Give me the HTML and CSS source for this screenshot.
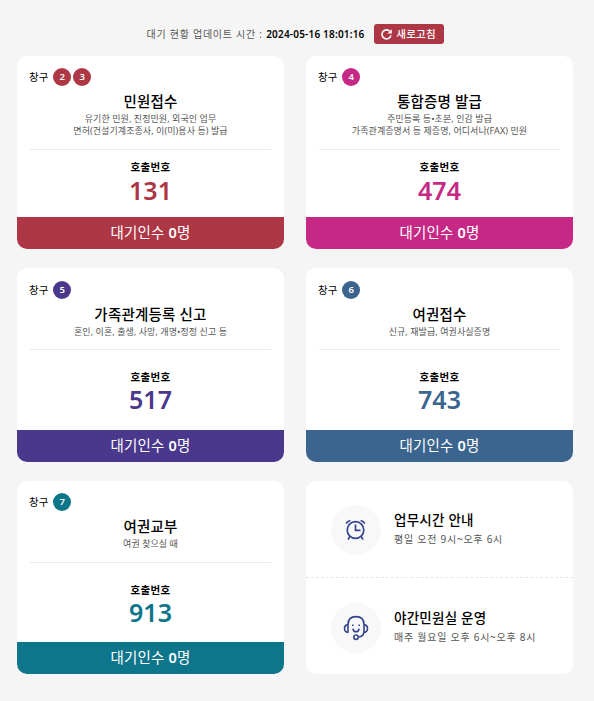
FILE: index.html
```html
<!DOCTYPE html>
<html lang="ko">
<head>
    <meta charset="UTF-8">
    <meta name="viewport" content="width=device-width, initial-scale=1.0">
    <title>민원실 대기 현황</title>
    <link rel="stylesheet" href="styles.css">
</head>
<body>
    <div class="update">
        <p class="update-time">대기 현황 업데이트 시간 : <strong>2024-05-16 18:01:16</strong></p>
        <button type="button" class="refresh">
            <svg width="11" height="11" viewBox="0 0 11 11" fill="none" stroke="#fff" stroke-width="1.6">
                <path d="M9.9 6.3A4.5 4.5 0 1 1 8.8 2.3"/>
                <path d="M10.8 0.2V4.6H6.4Z" fill="#fff" stroke="none"/>
            </svg>
            <span>새로고침</span>
        </button>
    </div>

    <div class="board">
        <div class="card red">
            <div class="window">창구 <span class="num">2</span><span class="num">3</span></div>
            <h2>민원접수</h2>
            <p class="desc">유기한 민원, 진정민원, 외국인 업무<br>면허(건설기계조종사, 이(미)용사 등) 발급</p>
            <div class="call">
                <h3>호출번호</h3>
                <strong>131</strong>
            </div>
            <div class="wait">대기인수 <b>0</b>명</div>
        </div>

        <div class="card pink">
            <div class="window">창구 <span class="num">4</span></div>
            <h2>통합증명 발급</h2>
            <p class="desc">주민등록 등•초본, 인감 발급<br>가족관계증명서 등 제증명, 어디서나(FAX) 민원</p>
            <div class="call">
                <h3>호출번호</h3>
                <strong>474</strong>
            </div>
            <div class="wait">대기인수 <b>0</b>명</div>
        </div>

        <div class="card purple single mid">
            <div class="window">창구 <span class="num">5</span></div>
            <h2>가족관계등록 신고</h2>
            <p class="desc">혼인, 이혼, 출생, 사망, 개명•정정 신고 등</p>
            <div class="call">
                <h3>호출번호</h3>
                <strong>517</strong>
            </div>
            <div class="wait">대기인수 <b>0</b>명</div>
        </div>

        <div class="card blue single mid">
            <div class="window">창구 <span class="num">6</span></div>
            <h2>여권접수</h2>
            <p class="desc">신규, 재발급, 여권사실증명</p>
            <div class="call">
                <h3>호출번호</h3>
                <strong>743</strong>
            </div>
            <div class="wait">대기인수 <b>0</b>명</div>
        </div>

        <div class="card teal single">
            <div class="window">창구 <span class="num">7</span></div>
            <h2>여권교부</h2>
            <p class="desc">여권 찾으실 때</p>
            <div class="call">
                <h3>호출번호</h3>
                <strong>913</strong>
            </div>
            <div class="wait">대기인수 <b>0</b>명</div>
        </div>

        <div class="card info">
            <div class="info-item">
                <div class="icon">
                    <svg width="24" height="24" viewBox="0 0 24 24" fill="none" stroke="#34458f" stroke-width="1.7">
                        <circle cx="11.5" cy="12" r="8.3"/>
                        <path d="M11.5 6.5V12.3H16.6"/>
                        <path d="M6 18.2L4 21.6M17 18.2L19 21.6"/>
                        <path d="M2.2 5.5Q3.4 3.4 6.4 2.5M20.8 5.5Q19.6 3.4 16.6 2.5"/>
                    </svg>
                </div>
                <div>
                    <h4>업무시간 안내</h4>
                    <p>평일 오전 9시~오후 6시</p>
                </div>
            </div>
            <div class="info-item">
                <div class="icon">
                    <svg width="26" height="26" viewBox="0 0 26 26" fill="none" stroke="#34458f" stroke-width="1.6">
                        <path d="M5 17.8V9.5Q5 1.6 13 1.6T21 9.5V16Q21 21.8 15.5 22"/>
                        <path d="M5 9.6Q1.5 10 1.5 13.5T5 17.4M21 9.6Q24.5 10 24.5 13.5T21 17.4"/>
                        <circle cx="13" cy="22.2" r="2.2"/>
                        <path d="M10 13.6Q10.3 16.8 13 16.8T16 13.6"/>
                        <path d="M9 10.2H10.6M15.4 10.2H17"/>
                    </svg>
                </div>
                <div>
                    <h4>야간민원실 운영</h4>
                    <p>매주 월요일 오후 6시~오후 8시</p>
                </div>
            </div>
        </div>
    </div>
</body>
</html>
```
FILE: styles.css
```css
* {
    box-sizing: border-box;
    margin: 0;
    padding: 0;
}
body {
    background-color: #f5f5f5;
    font-family: "Noto Sans", "Noto Sans CJK KR", sans-serif;
    color: #000;
    padding: 24px 21px 0 17px;
}
.update {
    display: flex;
    justify-content: center;
    align-items: center;
    gap: 9px;
    height: 20px;
    margin-bottom: 12px;
}
.update-time {
    font-size: 10px;
    line-height: 20px;
    letter-spacing: 0.75px;
    color: #555;
    white-space: nowrap;
}
.update-time strong {
    font-weight: 600;
    letter-spacing: 0.2px;
    color: #000;
}
.refresh {
    display: flex;
    justify-content: center;
    align-items: center;
    gap: 4px;
    width: 70px;
    height: 20px;
    border: none;
    border-radius: 3px;
    background-color: #ae3746;
    color: #fff;
    font-family: inherit;
    font-size: 10.5px;
    font-weight: 500;
    line-height: 18px;
    letter-spacing: 0.2px;
    cursor: pointer;
}
.refresh span {
    padding-bottom: 1px;
}
.board {
    display: grid;
    grid-template-columns: 267px 267px;
    grid-template-rows: 193px 194px 193px;
    gap: 19px 22px;
}
.card {
    display: flex;
    flex-direction: column;
    padding-top: 12px;
    border-radius: 10px;
    background-color: #fff;
    overflow: hidden;
    text-align: center;
    white-space: nowrap;
}
.window {
    display: flex;
    align-items: center;
    gap: 2px;
    height: 18px;
    padding-left: 12px;
    font-size: 10.5px;
    line-height: 16px;
}
.num {
    width: 18px;
    height: 18px;
    border-radius: 50%;
    background-color: var(--color);
    color: #fff;
    font-size: 9.5px;
    font-weight: 600;
    line-height: 18px;
    text-align: center;
}
.num:first-child {
    margin-left: 3px;
}
.card h2 {
    margin-top: 5px;
    font-size: 14.5px;
    font-weight: 500;
    line-height: 20px;
    letter-spacing: 0.2px;
}
.desc {
    margin: 2px 13px 0;
    padding-bottom: 12px;
    border-bottom: 1px solid #ebebeb;
    font-size: 9px;
    line-height: 12px;
    letter-spacing: 0.07px;
    color: #555;
}
.call {
    flex: 1;
    padding-top: 10px;
}
.call h3 {
    font-size: 10.5px;
    font-weight: 600;
    line-height: 14px;
    letter-spacing: 0.3px;
}
.call strong {
    display: block;
    margin-top: 1px;
    font-size: 25px;
    font-weight: 600;
    line-height: 30px;
    color: var(--color);
}
.single .call {
    padding-top: 20px;
}
.single .call strong {
    margin-top: 0;
}
.mid {
    padding-top: 13px;
}
.mid .desc {
    padding-bottom: 11px;
}
.wait {
    height: 32px;
    background-color: var(--color);
    color: #fff;
    font-size: 14.5px;
    line-height: 30px;
    letter-spacing: 0.2px;
}
.wait b {
    font-weight: 600;
}
.red { --color: #ae3746; }
.pink { --color: #c62885; }
.purple { --color: #49388c; }
.blue { --color: #3b658e; }
.teal { --color: #0e768b; }

.info {
    padding-top: 0;
    text-align: left;
}
.info-item {
    display: flex;
    align-items: center;
    gap: 13px;
    height: 96px;
    padding: 2px 0 0 25px;
}
.info-item + .info-item {
    height: 97px;
    padding-top: 4px;
    border-top: 1px dashed #e8e8e8;
}
.icon {
    display: flex;
    justify-content: center;
    align-items: center;
    width: 50px;
    height: 50px;
    border-radius: 50%;
    background-color: #f8f8f8;
}
.info h4 {
    margin-top: -2px;
    font-size: 13.5px;
    font-weight: 500;
    line-height: 20px;
    letter-spacing: 0.25px;
}
.info p {
    font-size: 10px;
    line-height: 18px;
    letter-spacing: 0.75px;
    color: #555;
}
```
